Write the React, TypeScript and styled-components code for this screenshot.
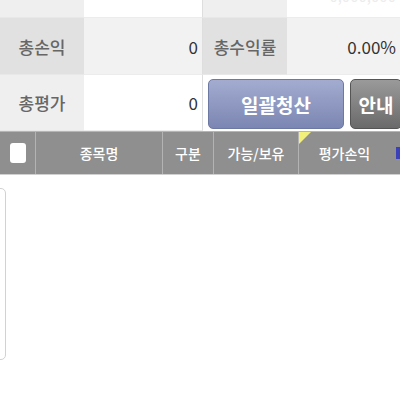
import React from "react";
import styled, { createGlobalStyle } from "styled-components";

const GlobalStyle = createGlobalStyle`
  body {
    margin: 0;
    background: #ffffff;
    font-family: "Noto Sans CJK KR", "Noto Sans", sans-serif;
  }
`;

const Page = styled.div`
  width: 400px;
  height: 400px;
  overflow: hidden;
  background: #fff;
`;

const Summary = styled.div`
  display: grid;
  grid-template-columns: 84px 119px 84px 113px;
  grid-template-rows: 18px 57px 56px;
`;

const Label = styled.div<{ $tone: "dark" | "light" }>`
  display: flex;
  align-items: center;
  justify-content: center;
  background: ${(p) => (p.$tone === "dark" ? "#e1e1e1" : "#efefef")};
  color: #666;
  font-size: 17px;
  font-weight: 500;
  border-bottom: 1px solid #e8e8e8;
  overflow: hidden;
`;

const Value = styled.div<{ $tone: "grey" | "white"; $edge?: boolean }>`
  display: flex;
  align-items: center;
  justify-content: flex-end;
  padding-right: 4px;
  background: ${(p) => (p.$tone === "grey" ? "#f2f2f2" : "#ffffff")};
  border-right: ${(p) => (p.$edge ? "1px solid #dedede" : "none")};
  border-bottom: 1px solid #ececec;
  color: #333;
  font-size: 17px;
  overflow: hidden;
`;

const FaintText = styled.span`
  align-self: flex-start;
  margin-top: -15px;
  color: #ececec;
  font-size: 15px;
`;

const ButtonCell = styled.div`
  grid-column: 3 / span 2;
  display: flex;
  gap: 6px;
  padding: 4px 0 2px 5px;
  overflow: hidden;
`;

const ActionButton = styled.button<{ $variant: "blue" | "grey"; $w: number }>`
  flex: 0 0 ${(p) => p.$w}px;
  height: 50px;
  border-radius: 5px;
  border: 1px solid ${(p) => (p.$variant === "blue" ? "#6e79a3" : "#555")};
  background: ${(p) =>
    p.$variant === "blue"
      ? "linear-gradient(#a3acd0, #7b86b2)"
      : "linear-gradient(#9a9a9a, #6a6a6a)"};
  color: #fff;
  font-family: inherit;
  font-size: 19px;
  font-weight: 700;
  padding: 0;
`;

const Header = styled.div`
  display: grid;
  grid-template-columns: 36px 127px 51px 85px 91px 10px;
  height: 42px;
  background: #8f8f8f;
  border-top: 1px solid #b5b5b5;
  border-bottom: 1px solid #d0d0d0;
`;

const HeadCell = styled.div<{ $last?: boolean }>`
  position: relative;
  display: flex;
  align-items: center;
  justify-content: center;
  color: #fff;
  font-size: 14px;
  font-weight: 500;
  border-right: ${(p) => (p.$last ? "none" : "1px solid #b3b3b3")};
`;

const CheckBox = styled.span`
  width: 16px;
  height: 20px;
  border-radius: 3px;
  background: #fff;
`;

const Corner = styled.span`
  position: absolute;
  top: 0;
  left: 0;
  width: 0;
  height: 0;
  border-top: 12px solid #f3f07a;
  border-right: 12px solid transparent;
`;

const SortMark = styled.span`
  width: 6px;
  height: 12px;
  margin-left: 6px;
  background: #3b3fb8;
`;

const Body = styled.div`
  padding-top: 13px;
`;

const SideCard = styled.div`
  width: 24px;
  height: 170px;
  margin-left: -20px;
  border: 1px solid #d2d2d2;
  border-radius: 5px;
  background: #fff;
`;

export default function App() {
  return (
    <Page>
      <GlobalStyle />
      <Summary>
        <Label $tone="light" />
        <Value $tone="white" $edge />
        <Label $tone="light" />
        <Value $tone="white">
          <FaintText>0,000,000</FaintText>
        </Value>

        <Label $tone="dark">총손익</Label>
        <Value $tone="grey" $edge>0</Value>
        <Label $tone="dark">총수익률</Label>
        <Value $tone="grey">0.00%</Value>

        <Label $tone="light">총평가</Label>
        <Value $tone="white" $edge>0</Value>
        <ButtonCell>
          <ActionButton $variant="blue" $w={136}>일괄청산</ActionButton>
          <ActionButton $variant="grey" $w={52}>안내</ActionButton>
        </ButtonCell>
      </Summary>

      <Header>
        <HeadCell>
          <CheckBox />
        </HeadCell>
        <HeadCell>종목명</HeadCell>
        <HeadCell>구분</HeadCell>
        <HeadCell>가능/보유</HeadCell>
        <HeadCell $last>
          <Corner />
          평가손익
        </HeadCell>
        <HeadCell $last>
          <SortMark />
        </HeadCell>
      </Header>

      <Body>
        <SideCard />
      </Body>
    </Page>
  );
}
